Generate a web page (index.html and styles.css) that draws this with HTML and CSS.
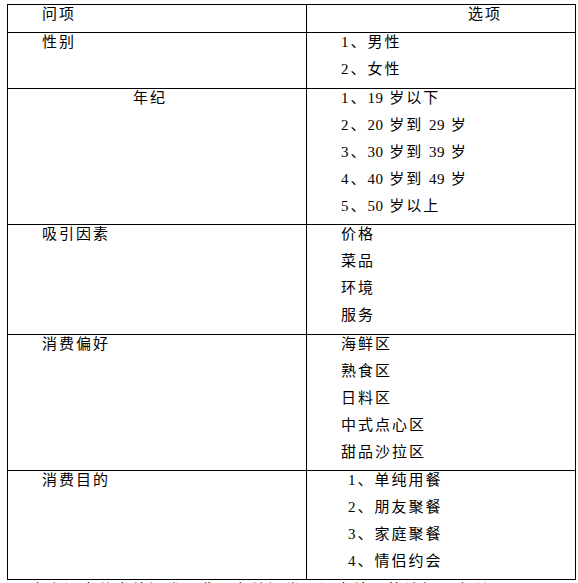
FILE: index.html
```html
<!DOCTYPE html>
<html lang="zh-CN">
<head>
<meta charset="utf-8">
<title>问卷选项</title>
<link rel="stylesheet" href="styles.css">
</head>
<body>
<table class="survey">
  <colgroup>
    <col class="col-q">
    <col class="col-opts">
  </colgroup>
  <tr class="row">
    <td class="q"><div class="line">问项</div></td>
    <td class="opts"><div class="line head-opt">选项</div></td>
  </tr>
  <tr class="row row-extra">
    <td class="q"><div class="line">性别</div></td>
    <td class="opts">
      <div class="line">1、男性</div>
      <div class="line">2、女性</div>
    </td>
  </tr>
  <tr class="row">
    <td class="q"><div class="line q-center">年纪</div></td>
    <td class="opts">
      <div class="line">1、<span class="num">19</span> 岁以下</div>
      <div class="line">2、<span class="num">20</span> 岁到 <span class="num">29</span> 岁</div>
      <div class="line">3、<span class="num">30</span> 岁到 <span class="num">39</span> 岁</div>
      <div class="line">4、<span class="num">40</span> 岁到 <span class="num">49</span> 岁</div>
      <div class="line">5、<span class="num">50</span> 岁以上</div>
    </td>
  </tr>
  <tr class="row row-extra">
    <td class="q"><div class="line">吸引因素</div></td>
    <td class="opts">
      <div class="line">价格</div>
      <div class="line">菜品</div>
      <div class="line">环境</div>
      <div class="line">服务</div>
    </td>
  </tr>
  <tr class="row">
    <td class="q"><div class="line">消费偏好</div></td>
    <td class="opts">
      <div class="line">海鲜区</div>
      <div class="line">熟食区</div>
      <div class="line">日料区</div>
      <div class="line">中式点心区</div>
      <div class="line">甜品沙拉区</div>
    </td>
  </tr>
  <tr class="row">
    <td class="q"><div class="line">消费目的</div></td>
    <td class="opts opts-indent">
      <div class="line">1、单纯用餐</div>
      <div class="line">2、朋友聚餐</div>
      <div class="line">3、家庭聚餐</div>
      <div class="line">4、情侣约会</div>
    </td>
  </tr>
</table>
<p class="after">本次调查共发放问卷，收回有效问卷，调查结果统计如下表所示。</p>
</body>
</html>
```

FILE: styles.css
```css
html, body {
  margin: 0;
  padding: 0;
  background: #ffffff;
}

body {
  padding: 4px 0 0 7px;
  font-family: "Liberation Serif", "Noto Sans CJK SC", serif;
  font-size: 15px;
  color: #000000;
  overflow: hidden;
}

.survey {
  border-collapse: collapse;
  width: 568px;
  table-layout: fixed;
}

.col-q {
  width: 299px;
}

.col-opts {
  width: 269px;
}

.survey td {
  border: 1px solid #000000;
  vertical-align: top;
  padding: 0;
}

.q {
  padding-left: 34px !important;
}

.opts {
  padding-left: 34px !important;
}

.opts-indent {
  padding-left: 41px !important;
}

.row-extra td {
  padding-bottom: 1px !important;
}

.line {
  line-height: 19px;
  padding-bottom: 8px;
  letter-spacing: 2px;
  white-space: nowrap;
}

.num {
  letter-spacing: 0.5px;
}

.q-center {
  padding-left: 91px;
}

.head-opt {
  padding-left: 127px;
}

.after {
  margin: 1px 0 0 23px;
  line-height: 19px;
  letter-spacing: 2px;
  white-space: nowrap;
}
```
